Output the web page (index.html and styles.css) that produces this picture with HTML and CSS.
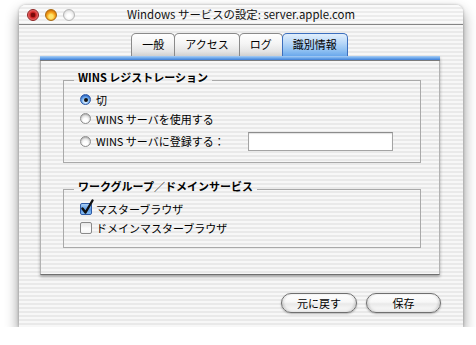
FILE: index.html
```html
<!DOCTYPE html>
<html lang="ja">
<head>
<meta charset="utf-8">
<link rel="stylesheet" href="styles.css">
</head>
<body>
<div class="window">
  <div class="titlebar">
    <div class="lights">
      <span class="light close"></span>
      <span class="light mini"></span>
      <span class="light zoom"></span>
    </div>
    <div class="title">Windows サービスの設定: server.apple.com</div>
  </div>
  <div class="body">
    <div class="tabview">
      <div class="tabs">
        <div class="tab">一般</div>
        <div class="tab">アクセス</div>
        <div class="tab">ログ</div>
        <div class="tab active">識別情報</div>
      </div>
      <div class="pane">
        <div class="pane-bar"></div>
        <fieldset class="group group-wins">
          <legend>WINS レジストレーション</legend>
          <div class="row"><span class="radio on"></span><span>切</span></div>
          <div class="row"><span class="radio"></span><span>WINS サーバを使用する</span></div>
          <div class="row row-field"><span class="radio"></span><span class="label-fixed">WINS サーバに登録する：</span><span class="field"></span></div>
        </fieldset>
        <fieldset class="group group-work">
          <legend>ワークグループ／ドメインサービス</legend>
          <div class="row"><span class="check on"><svg class="tick" width="14" height="16" viewBox="0 0 14 16"><path d="M2.5 9.5 L5.5 13.5 L12.5 1.5" fill="none" stroke="#111" stroke-width="2.4" stroke-linecap="round" stroke-linejoin="round"/></svg></span><span>マスターブラウザ</span></div>
          <div class="row"><span class="check"></span><span>ドメインマスターブラウザ</span></div>
        </fieldset>
      </div>
    </div>
    <div class="buttons">
      <div class="btn btn-revert">元に戻す</div>
      <div class="btn btn-save">保存</div>
    </div>
  </div>
</div>
</body>
</html>
```
FILE: styles.css
```css
html, body {
  margin: 0;
  padding: 0;
  background: #ffffff;
}
body {
  font-family: "Noto Sans CJK JP", "Noto Sans", sans-serif;
  font-size: 11px;
  color: #000;
}
.window {
  margin: 5px 0 0 19px;
  width: 444px;
  border-radius: 7px 7px 0 0;
  background: repeating-linear-gradient(to bottom, #f7f7f7 0 2px, #e9e9e9 2px 4px);
  box-shadow: 0 7px 14px rgba(0,0,0,0.45), 0 0 3px rgba(0,0,0,0.28);
}
.titlebar {
  height: 19px;
  border-bottom: 1px solid #858585;
  display: grid;
  grid-template-columns: 1fr auto 1fr;
  align-items: center;
  border-radius: 7px 7px 0 0;
  background: repeating-linear-gradient(to bottom, #fafafa 0 2px, #ececec 2px 4px);
}
.lights {
  display: flex;
  gap: 6px;
  padding-left: 8px;
}
.light {
  width: 12px;
  height: 12px;
  border-radius: 50%;
  box-sizing: border-box;
}
.close {
  background: radial-gradient(circle at 50% 50%, #7a0a0a 0 2px, #c21b1b 2.5px, #e24b4b 4px, #f49a9a 6px);
  border: 1px solid #8d2020;
}
.mini {
  background: radial-gradient(circle at 50% 65%, #ffe36a 0 2px, #f7a51c 4px, #d9780a 6px);
  border: 1px solid #a86a10;
}
.zoom {
  background: radial-gradient(circle at 50% 60%, #ffffff 0 2px, #f0f0f0 4px, #d9d9d9 6px);
  border: 1px solid #b5b5b5;
}
.title {
  font-size: 11.4px;
  line-height: 19px;
  white-space: nowrap;
  color: #111;
}
.body {
  padding: 8px 22px 14px 21px;
}
.tabview {
  margin-right: 1px;
}
.tabs {
  display: flex;
  justify-content: center;
  height: 23px;
}
.tab {
  box-sizing: border-box;
  height: 23px;
  padding: 0 10px;
  line-height: 21px;
  font-size: 11px;
  border: 1px solid #8a8a8a;
  border-bottom: none;
  border-radius: 5px 5px 0 0;
  margin-left: -1px;
  background: linear-gradient(to bottom, #ffffff 0%, #f4f4f4 45%, #e4e4e4 80%, #cfcfcf 100%);
}
.tab.active {
  border-color: #3c6fbe;
  position: relative;
  background: linear-gradient(to bottom, #e2effc 0%, #b9d8f8 40%, #8fc0f2 75%, #6aa8ec 100%);
}
.pane {
  border: 1px solid #b2b2b2;
  border-top: none;
  border-bottom: 1px solid #6f6f6f;
  box-shadow: 0 2px 3px rgba(0,0,0,0.3);
  padding-bottom: 26px;
}
.pane-bar {
  height: 4px;
  margin: 0 -1px;
  background: linear-gradient(to bottom, #a8cdf4, #6ea9ec 50%, #3f7ed6);
  border-bottom: 1px solid #7a7a7a;
}
.group {
  margin: 0 18px 0 22px;
  border: 1px solid #a9a9a9;
  padding: 0 0 10px 10px;
  min-width: 0;
}
.group-wins {
  margin-top: 9px;
  padding-bottom: 11px;
}
.group-work {
  margin-top: 16px;
}
.group legend {
  font-weight: bold;
  font-size: 11px;
  line-height: 14px;
  padding: 0 4px 6px;
}
.row {
  display: flex;
  align-items: center;
  height: 19px;
  padding-left: 6px;
  white-space: nowrap;
}
.row-field {
  height: 20px;
  margin-top: 3px;
}
.radio {
  width: 11px;
  height: 11px;
  box-sizing: border-box;
  border-radius: 50%;
  margin-right: 5px;
  border: 1px solid #8e8e8e;
  background: radial-gradient(circle at 50% 70%, #ffffff 0 2px, #eeeeee 3.5px, #cfcfcf 6px);
  box-shadow: inset 0 1px 1px rgba(0,0,0,0.15);
  display: flex;
  align-items: center;
  justify-content: center;
}
.radio.on {
  border-color: #2f5aa8;
  background: radial-gradient(circle at 50% 70%, #cfe6fc 0 1.5px, #78b2f0 3.5px, #3675d6 6px);
}
.radio.on::after {
  content: "";
  width: 4px;
  height: 4px;
  border-radius: 50%;
  background: #111;
}
.label-fixed {
  width: 152px;
}
.field {
  width: 145px;
  height: 19px;
  box-sizing: border-box;
  border: 1px solid #a4a4a4;
  border-top-color: #8c8c8c;
  background: #fff;
  box-shadow: inset 0 1px 1px rgba(0,0,0,0.12);
}
.check {
  position: relative;
  width: 12px;
  height: 12px;
  box-sizing: border-box;
  margin-right: 4px;
  border-radius: 2px;
  border: 1px solid #8a8a8a;
  background: linear-gradient(to bottom, #e6e6e6, #ffffff 60%, #f2f2f2);
}
.check.on {
  border-color: #2d5aa6;
  background: linear-gradient(to bottom, #a9cff5, #5b9ae6 55%, #86bdf3);
}
.tick {
  position: absolute;
  left: -1px;
  top: -5px;
}
.buttons {
  display: flex;
  justify-content: flex-end;
  gap: 9px;
  margin-top: 18px;
}
.btn {
  box-sizing: border-box;
  width: 76px;
  height: 20px;
  border-radius: 10px;
  border: 1px solid #6f6f6f;
  text-align: center;
  line-height: 18px;
  font-size: 11px;
  background: linear-gradient(to bottom, #ffffff 0%, #f7f7f7 45%, #e9e9e9 55%, #ffffff 100%);
  box-shadow: 0 1px 2px rgba(0,0,0,0.28), inset 0 -2px 3px rgba(0,0,0,0.07), inset 2px 0 2px rgba(0,0,0,0.08), inset -2px 0 2px rgba(0,0,0,0.08);
}
.btn-save {
  width: 75px;
}
```
